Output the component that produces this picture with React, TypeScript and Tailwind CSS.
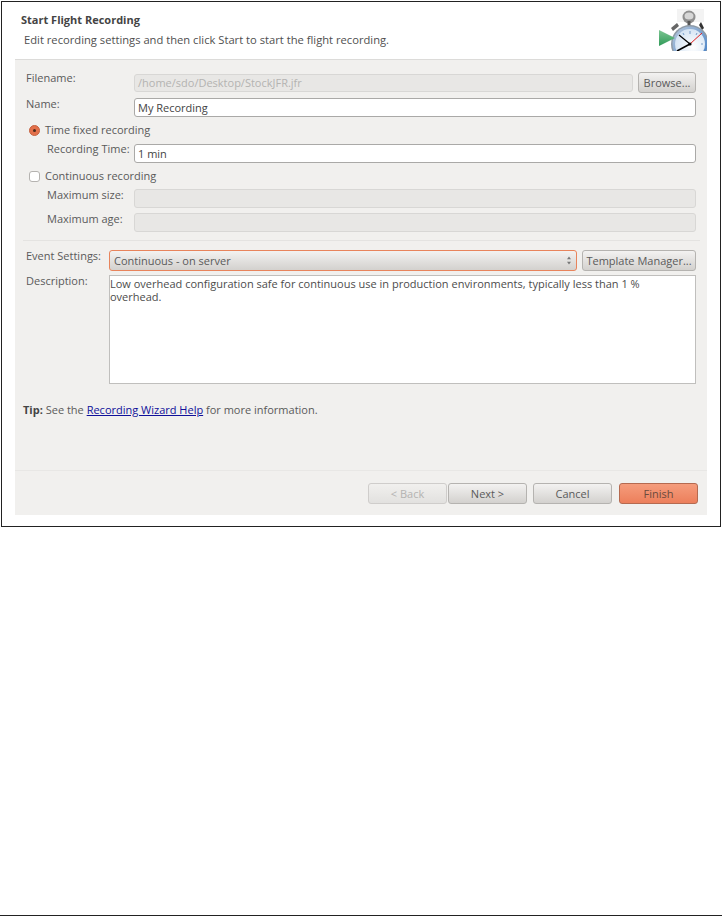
const F = "font-['Open_Sans','Noto_Sans',sans-serif]";

function Field({ className = "", children }: { className?: string; children?: React.ReactNode }) {
  return <div className={`rounded-[3px] border flex items-center pl-[3px] text-[11px] leading-none ${className}`}>{children}</div>;
}

function Btn({ w, label, className = "" }: { w: string; label: string; className?: string }) {
  return (
    <div className={`${w} h-[21px] shrink-0 rounded-[3px] border flex items-center justify-center text-[11px] leading-none ${className}`}>
      {label}
    </div>
  );
}

const grey = "border-[#b5b3b0] bg-gradient-to-b from-[#f3f2f1] to-[#d3d1ce] text-[#5a5a5a]";

function Icon() {
  return (
    <svg width="48" height="42" viewBox="0 0 48 42" className="block">
      <defs>
        <linearGradient id="ring" x1="0" y1="0" x2="1" y2="1">
          <stop offset="0" stopColor="#b9c9dc" />
          <stop offset="1" stopColor="#3f7cc4" />
        </linearGradient>
        <radialGradient id="face" cx="0.6" cy="0.6" r="0.7">
          <stop offset="0" stopColor="#ffffff" />
          <stop offset="1" stopColor="#cfe0f2" />
        </radialGradient>
        <linearGradient id="play" x1="0" y1="0" x2="0" y2="1">
          <stop offset="0" stopColor="#7cc592" />
          <stop offset="1" stopColor="#2f9a58" />
        </linearGradient>
      </defs>
      <rect x="18" y="0" width="27" height="13" fill="#ececec" opacity="0.65" />
      <circle cx="30" cy="8" r="6.5" fill="#8f8f8f" />
      <ellipse cx="30" cy="7" rx="4.5" ry="3.5" fill="#d6d6d6" />
      <rect x="28.5" y="12" width="3" height="7" fill="#565656" />
      <path d="M12 19l6-5 2 3-6 5z" fill="#666" />
      <path d="M42 13l3 6-2 2-3-5z" fill="#333" />
      <circle cx="31" cy="35" r="19" fill="#8e9aa6" />
      <circle cx="31" cy="35" r="17.5" fill="url(#ring)" />
      <circle cx="31" cy="35" r="15" fill="url(#face)" />
      <path d="M31 35L20 26" stroke="#000" strokeWidth="1.2" fill="none" />
      <path d="M31 35L43 24" stroke="#e02020" strokeWidth="1" fill="none" />
      <path d="M31 35L18 42" stroke="#000" strokeWidth="1.6" fill="none" />
      <circle cx="31" cy="35" r="1.6" fill="#000" />
      <path d="M31 22v3M38 24l-1 2M24 24l1 2M44 35h-2" stroke="#5b89bd" strokeWidth="0.8" fill="none" />
      <path d="M0 21L16 29L0 37z" fill="url(#play)" />
    </svg>
  );
}

const dis = "border-[#d8d7d5] bg-[#e8e7e5]";
const live = "border-[#aaa9a7] bg-white text-[#444]";

export default function App() {
  return (
    <div className={`w-[722px] h-[916px] bg-white flex flex-col ${F} text-[#5a5a5a]`}>
      <div className="ml-[1px] mt-[1px] w-[720px] h-[526px] shrink-0 border border-[#222] flex flex-col pl-[13px] pr-[13px] pb-[11px]">
        <div className="h-[58px] shrink-0 flex items-start border-b border-[#dcdbd9]">
          <div className="pl-[6px] pt-[11px]">
            <div className="text-[11px] font-bold leading-[14px] text-[#444]">Start Flight Recording</div>
            <div className="pl-[3px] pt-[6px] text-[11.2px] leading-[14px] text-[#4f4f4f] whitespace-nowrap">Edit recording settings and then click Start to start the flight recording.</div>
          </div>
          <div className="ml-auto mt-[7px]"><Icon /></div>
        </div>
        <div className="flex-1 bg-[#f1f0ee] flex flex-col">
          <div className="flex flex-col pl-[11px] pr-[11px] pt-[12px]">
            <div className="flex items-center h-[21px]">
              <div className="w-[108px] text-[11px] -mt-[8px]">Filename:</div>
              <Field className={`flex-1 h-[18px] ${dis} text-[#b4b3b1]`}>/home/sdo/Desktop/StockJFR.jfr</Field>
              <Btn w="w-[58px] ml-[5px]" label="Browse..." className={grey} />
            </div>
            <div className="flex items-center h-[19px] mt-[5px]">
              <div className="w-[108px] text-[11px] -mt-[7px]">Name:</div>
              <Field className={`flex-1 h-[19px] ${live}`}>My Recording</Field>
            </div>
            <div className="flex items-center h-[19px] mt-[4px] pl-[3px]">
              <div className="w-[11px] h-[11px] rounded-full bg-[#e3704a] border border-[#c4613f] flex items-center justify-center"><div className="w-[3px] h-[3px] rounded-full bg-[#4a2a1c]" /></div>
              <div className="ml-[5px] text-[11px]">Time fixed recording</div>
            </div>
            <div className="flex items-center h-[19px] mt-[4px]">
              <div className="w-[108px] pl-[21px] text-[11px] -mt-[9px] whitespace-nowrap">Recording Time:</div>
              <Field className={`flex-1 h-[19px] ${live}`}>1 min</Field>
            </div>
            <div className="flex items-center h-[19px] mt-[4px] pl-[3px]">
              <div className="w-[11px] h-[11px] rounded-[3px] bg-white border border-[#b5b3b0]" />
              <div className="ml-[5px] text-[11px]">Continuous recording</div>
            </div>
            <div className="flex items-center h-[19px] mt-[3px]">
              <div className="w-[108px] pl-[21px] text-[11px] -mt-[7px]">Maximum size:</div>
              <Field className={`flex-1 h-[19px] ${dis}`} />
            </div>
            <div className="flex items-center h-[19px] mt-[5px]">
              <div className="w-[108px] pl-[21px] text-[11px] -mt-[7px]">Maximum age:</div>
              <Field className={`flex-1 h-[19px] ${dis}`} />
            </div>
          </div>
          <div className="h-px bg-[#e4e3e1] mt-[8px] ml-[8px] mr-[7px] shrink-0" />
          <div className="flex flex-col pl-[11px] pr-[11px] mt-[9px]">
            <div className="flex items-center h-[21px]">
              <div className="w-[83px] text-[11px] -mt-[9px] whitespace-nowrap">Event Settings:</div>
              <div className="flex-1 h-[21px] rounded-[3px] border border-[#e8845c] bg-gradient-to-b from-[#f3f2f1] to-[#d3d1ce] flex items-center justify-between pl-[4px] pr-[4px] text-[11px] leading-none">
                <span>Continuous - on server</span>
                <svg width="6" height="9" viewBox="0 0 6 9"><path d="M3 0.5L5 3.2H1zM3 8.5L5 5.8H1z" fill="#777" /></svg>
              </div>
              <Btn w="w-[114px] ml-[5px]" label="Template Manager..." className={grey} />
            </div>
            <div className="flex mt-[4px]">
              <div className="w-[83px] text-[11px] leading-[14px] -mt-[1px]">Description:</div>
              <div className="flex-1 h-[109px] border border-[#c0bfbd] bg-white pt-[1px] text-[11px] leading-[13px] text-[#4c4c4c]">
                Low overhead configuration safe for continuous use in production environments, typically less than 1 %<br />overhead.
              </div>
            </div>
          </div>
          <div className="pl-[8px] mt-[19px] text-[11px] leading-[14px] whitespace-nowrap">
            <span className="font-bold text-[#444]">Tip:</span> See the <span className="text-[#10109a] underline">Recording Wizard Help</span> for more information.
          </div>
          <div className="flex-1" />
          <div className="h-[45px] shrink-0 border-t border-[#e8e7e5] flex items-start justify-end pt-[12px] pr-[9px]">
            <Btn w="w-[79px]" label="< Back" className="border-[#cfcdcb] bg-gradient-to-b from-[#f1f0ee] to-[#e2e1df] text-[#b4b3b1]" />
            <Btn w="w-[79px] ml-[1px]" label="Next >" className={grey} />
            <Btn w="w-[79px] ml-[6px]" label="Cancel" className={grey} />
            <Btn w="w-[79px] ml-[7px]" label="Finish" className="border-[#b56a50] bg-gradient-to-b from-[#f59c7c] to-[#ec7f5b] text-[#6b4a3c]" />
          </div>
        </div>
      </div>
      <div className="flex-1" />
      <div className="h-px bg-[#222] shrink-0" />
    </div>
  );
}
